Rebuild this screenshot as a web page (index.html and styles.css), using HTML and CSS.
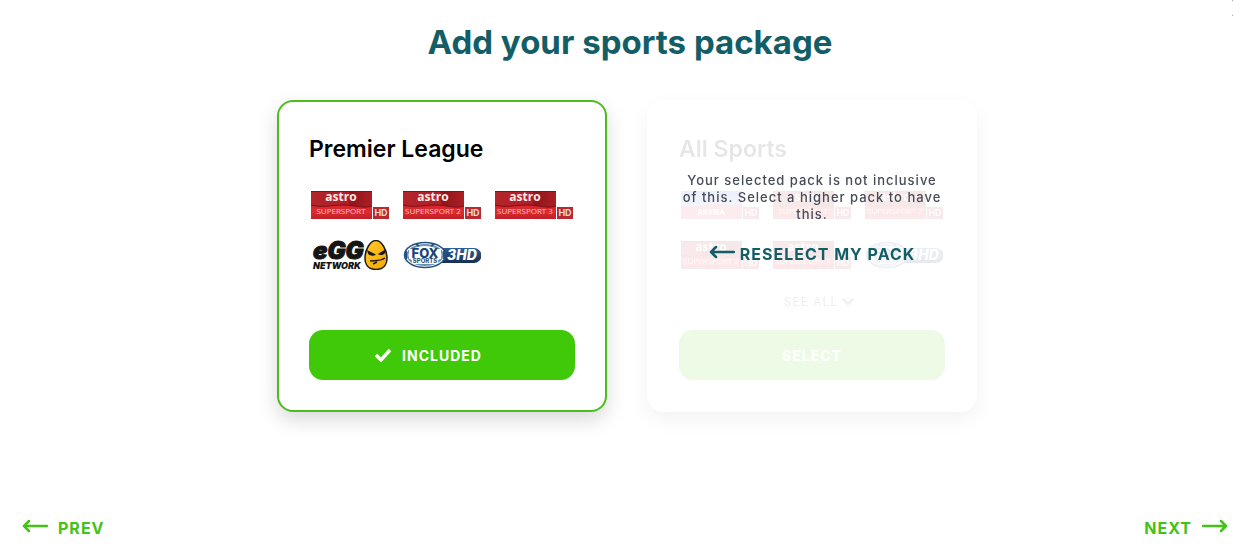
FILE: index.html
```html
<!DOCTYPE html>
<html lang="en">
<head>
  <meta charset="UTF-8" />
  <meta name="viewport" content="width=device-width, initial-scale=1.0" />
  <title>Add your sports package</title>
  <link rel="stylesheet" href="styles.css">
</head>
<body>

  <!-- shared artwork -->
  <svg class="defs" width="0" height="0" aria-hidden="true">
    <defs>
      <linearGradient id="redTop" x1="0" x2="1" y1="0" y2="0">
        <stop offset="0" stop-color="#b3252b" />
        <stop offset="0.6" stop-color="#b01f25" />
        <stop offset="0.66" stop-color="#8f151b" />
        <stop offset="1" stop-color="#ad1f25" />
      </linearGradient>
      <linearGradient id="redBottom" x1="0" x2="0" y1="0" y2="1">
        <stop offset="0" stop-color="#c91d24" />
        <stop offset="0.75" stop-color="#dd2a31" />
        <stop offset="1" stop-color="#bf2027" />
      </linearGradient>
      <linearGradient id="arenaTop" x1="0" x2="0" y1="0" y2="1">
        <stop offset="0" stop-color="#3f56d8" />
        <stop offset="1" stop-color="#8f9fe8" />
      </linearGradient>
      <linearGradient id="foxBlue" x1="0" x2="0" y1="0" y2="1">
        <stop offset="0" stop-color="#2d5f96" />
        <stop offset="1" stop-color="#16304f" />
      </linearGradient>
      <linearGradient id="eggYellow" x1="0" x2="1" y1="0" y2="1">
        <stop offset="0" stop-color="#ffcb2e" />
        <stop offset="1" stop-color="#f7a600" />
      </linearGradient>
      <symbol id="astro" viewBox="0 0 78 30">
        <rect x="0" y="1" width="61" height="28" fill="url(#redBottom)" />
        <path d="M0 1h61v15c-10 3-17-1-29-1S11 18 0 15z" fill="url(#redTop)" />
        <path d="M0 15c11 3 20 0 32 0s19 4 29 1" fill="none" stroke="#7c0f14" stroke-width="1" />
        <path d="M0 1.5h61" stroke="#7c1418" />
        <rect x="62" y="17" width="16" height="12" fill="#b92a30" />
        <text class="logo-astro" x="30" y="11">astro</text>
        <text class="logo-hd" x="70" y="26">HD</text>
      </symbol>
      <symbol id="arena" viewBox="0 0 78 30">
        <rect x="0" y="1" width="61" height="28" fill="#e0444a" />
        <path d="M0 1h61v13c-10 3-17-1-29 0S11 18 0 15z" fill="url(#arenaTop)" />
        <rect x="62" y="17" width="16" height="12" fill="#b92a30" />
        <text class="logo-hd" x="70" y="26">HD</text>
      </symbol>
      <symbol id="fox" viewBox="0 0 78 30">
        <path d="M38 8h33a7 7 0 0 1 0 15H38z" fill="url(#foxBlue)" />
        <ellipse cx="22" cy="15" rx="20.5" ry="12.500" fill="#fff" stroke="#24517f" stroke-width="1.500" />
        <ellipse cx="22" cy="15" rx="17.500" ry="10" fill="none" stroke="#6f90b3" stroke-width="2" />
        <path d="M3 11v8M41 11v8M13 4l3 2M31 4l-3 2" stroke="#24517f" stroke-width="2" />
        <path d="M6 9h32v10H6zM9 19h26v5H9z" fill="#fff" />
        <text class="logo-fox" x="22" y="18">FOX</text>
        <text class="logo-sports" x="22" y="23">SPORTS</text>
        <text class="logo-3hd" x="59" y="20">3HD</text>
      </symbol>
      <symbol id="egg" viewBox="0 0 78 30">
        <text class="logo-egg" x="2" y="19">eGG</text>
        <text class="logo-network" x="2" y="29">NETWORK</text>
        <path d="M65 0.500c5.500 0 11 9.500 11 17.500 0 7-4 11.500-11 11.500S54 25 54 18C54 10 59 .5 65 .5z" fill="url(#eggYellow)" stroke="#1d1a12" stroke-width="1.500" />
        <path d="M56 10l9 4.500c-2 2-7 1.500-8-1zM75 9l-8 5c2 2 6 1 7-1z" fill="#1d1a12" />
        <path d="M59 21c5-1 9 1 15-3M62 24l4-2" fill="none" stroke="#1d1a12" stroke-width="1.500" />
      </symbol>
      <symbol id="arrowLeft" viewBox="0 0 26 14">
        <path d="M25 7H2M7 2L2 7l5 5" fill="none" stroke="currentColor" stroke-width="2.500" stroke-linecap="round" stroke-linejoin="round" />
      </symbol>
      <symbol id="arrowRight" viewBox="0 0 26 14">
        <path d="M1 7h23M19 2l5 5-5 5" fill="none" stroke="currentColor" stroke-width="2.500" stroke-linecap="round" stroke-linejoin="round" />
      </symbol>
    </defs>
  </svg>

  <button class="close" type="button" aria-label="Close">
    <svg width="20" height="20" viewBox="0 0 20 20"><path d="M2 2l16 16M18 2L2 18" stroke="#333" stroke-width="2" /></svg>
  </button>

  <main class="page">
    <h1 class="page-title">Add your sports package</h1>

    <div class="packs">
      <section class="pack selected">
        <div class="pack-body">
          <h2 class="pack-name">Premier League</h2>
          <div class="channels">
            <svg class="channel" viewBox="0 0 78 30"><use href="#astro" /><text class="logo-name" x="30" y="24">SUPERSPORT</text></svg>
            <svg class="channel" viewBox="0 0 78 30"><use href="#astro" /><text class="logo-name" x="30" y="24">SUPERSPORT 2</text></svg>
            <svg class="channel" viewBox="0 0 78 30"><use href="#astro" /><text class="logo-name" x="30" y="24">SUPERSPORT 3</text></svg>
            <svg class="channel" viewBox="0 0 78 30"><use href="#egg" /></svg>
            <svg class="channel" viewBox="0 0 78 30"><use href="#fox" /></svg>
          </div>
          <button class="pack-btn" type="button">
            <svg width="18" height="14" viewBox="0 0 18 14"><path d="M2 7l5 5L16 2" fill="none" stroke="currentColor" stroke-width="3.500" /></svg>
            INCLUDED
          </button>
        </div>
      </section>

      <section class="pack locked">
        <div class="pack-body">
          <h2 class="pack-name">All Sports</h2>
          <div class="channels">
            <svg class="channel" viewBox="0 0 78 30"><use href="#arena" /><text class="logo-name strong" x="30" y="25">ARENA</text></svg>
            <svg class="channel" viewBox="0 0 78 30"><use href="#astro" /><text class="logo-name" x="30" y="24">SUPERSPORT</text></svg>
            <svg class="channel" viewBox="0 0 78 30"><use href="#astro" /><text class="logo-name" x="30" y="24">SUPERSPORT 2</text></svg>
            <svg class="channel" viewBox="0 0 78 30"><use href="#astro" /><text class="logo-name" x="30" y="24">SUPERSPORT 3</text></svg>
            <svg class="channel" viewBox="0 0 78 30"><use href="#astro" /><text class="logo-name" x="30" y="24">SUPERSPORT 4</text></svg>
            <svg class="channel" viewBox="0 0 78 30"><use href="#fox" /></svg>
          </div>
          <button class="see-all" type="button">
            SEE ALL
            <svg width="12" height="8" viewBox="0 0 12 8"><path d="M1 1l5 5 5-5" fill="none" stroke="currentColor" stroke-width="2" /></svg>
          </button>
          <button class="pack-btn" type="button" disabled>SELECT</button>
        </div>
        <div class="overlay">
          <p class="overlay-text">Your selected pack is not inclusive of this. Select a higher pack to have this.</p>
          <a class="reselect" href="#">
            <svg class="arrow" viewBox="0 0 26 14"><use href="#arrowLeft" /></svg>
            RESELECT MY PACK
          </a>
        </div>
      </section>
    </div>

    <nav class="steps">
      <a class="step" href="#"><svg class="arrow" viewBox="0 0 26 14"><use href="#arrowLeft" /></svg>PREV</a>
      <a class="step" href="#">NEXT<svg class="arrow" viewBox="0 0 26 14"><use href="#arrowRight" /></svg></a>
    </nav>
  </main>

</body>
</html>
```

FILE: styles.css
```css
* {
  box-sizing: border-box;
}

body {
  margin: 0;
  background: #fff;
  font-family: Inter, "Open Sans", sans-serif;
  overflow-x: hidden;
}

h1, h2, p {
  margin: 0;
}

button {
  font-family: inherit;
  border: 0;
  cursor: pointer;
}

a {
  text-decoration: none;
}

.defs {
  position: absolute;
}

.close {
  position: fixed;
  top: -2px;
  right: -18px;
  padding: 0;
  background: none;
}

.close svg {
  display: block;
}

.page {
  min-height: 100vh;
  padding: 20px 5px 20px 22px;
  display: flex;
  flex-direction: column;
}

.page-title {
  padding-left: 10px;
  color: #135e66;
  font-size: 33px;
  line-height: 44px;
  font-weight: 700;
  text-align: center;
}

.packs {
  display: flex;
  justify-content: center;
  gap: 40px;
  margin-top: 36px;
  padding-left: 4px;
}

.pack {
  position: relative;
  display: flex;
  width: 330px;
  border: 2px solid transparent;
  border-radius: 16px;
  background: #fff;
  box-shadow: 0 8px 20px rgba(0, 0, 0, 0.05);
}

.pack.selected {
  border-color: #4bbd1f;
  box-shadow: 0 8px 20px rgba(0, 0, 0, 0.15);
}

.pack-body {
  flex: 1;
  display: flex;
  flex-direction: column;
  padding: 30px;
}

.locked .pack-body {
  opacity: 0.1;
}

.pack-name {
  color: #000;
  font-size: 23px;
  line-height: 34px;
  font-weight: 600;
}

.channels {
  display: grid;
  grid-template-columns: repeat(3, 1fr);
  gap: 20px 10px;
  margin-top: 24px;
}

.channel {
  display: block;
  justify-self: center;
  width: 78px;
  height: 30px;
}

.see-all {
  display: flex;
  justify-content: center;
  align-items: center;
  gap: 4px;
  margin: 22px 0 18px 14px;
  padding: 0;
  background: none;
  color: #555;
  font-size: 12px;
  line-height: 20px;
  letter-spacing: 1px;
}

.pack-btn {
  display: flex;
  justify-content: center;
  align-items: center;
  gap: 10px;
  height: 50px;
  margin-top: auto;
  padding: 0;
  border-radius: 14px;
  background: #40c908;
  color: #fff;
  font-size: 14px;
  font-weight: 700;
  letter-spacing: 1px;
}

.selected .pack-btn {
  padding-right: 28px;
}

.overlay {
  position: absolute;
  inset: 70px 30px auto;
  text-align: center;
}

.overlay-text {
  color: #454b57;
  font-size: 13px;
  line-height: 17px;
  font-weight: 500;
  letter-spacing: 1px;
}

.reselect {
  display: flex;
  justify-content: center;
  align-items: center;
  gap: 5px;
  margin-top: 20px;
  color: #135e66;
  font-size: 16px;
  line-height: 22px;
  font-weight: 700;
  letter-spacing: 1px;
}

.arrow {
  width: 26px;
  height: 14px;
}

.reselect .arrow,
.step .arrow {
  margin-bottom: 4px;
}

.steps {
  display: flex;
  justify-content: space-between;
  margin-top: auto;
}

.step {
  display: flex;
  align-items: center;
  gap: 10px;
  color: #43c217;
  font-size: 16px;
  line-height: 24px;
  font-weight: 700;
  letter-spacing: 1px;
}

/* channel logos */
.logo-astro {
  font: 700 12px "Open Sans", sans-serif;
  fill: #fbe9e9;
  text-anchor: middle;
}

.logo-name {
  font: 500 8px "Open Sans", sans-serif;
  fill: #f7c4c4;
  text-anchor: middle;
}

.logo-name.strong {
  font-weight: 700;
  fill: #fff;
}

.logo-hd {
  font: 700 9px Inter, sans-serif;
  fill: #f3d6d6;
  text-anchor: middle;
}

.logo-fox {
  font: 800 13px Inter, sans-serif;
  fill: #1c4373;
  text-anchor: middle;
}

.logo-sports {
  font: 700 6px Inter, sans-serif;
  fill: #24466c;
  text-anchor: middle;
}

.logo-3hd {
  font: italic 800 14px Inter, sans-serif;
  fill: #fff;
  text-anchor: middle;
}

.logo-egg {
  font: italic 900 24px Inter, sans-serif;
  fill: #151515;
  stroke: #151515;
  stroke-width: 1px;
}

.logo-network {
  font: italic 900 9px Inter, sans-serif;
  fill: #151515;
}
```
